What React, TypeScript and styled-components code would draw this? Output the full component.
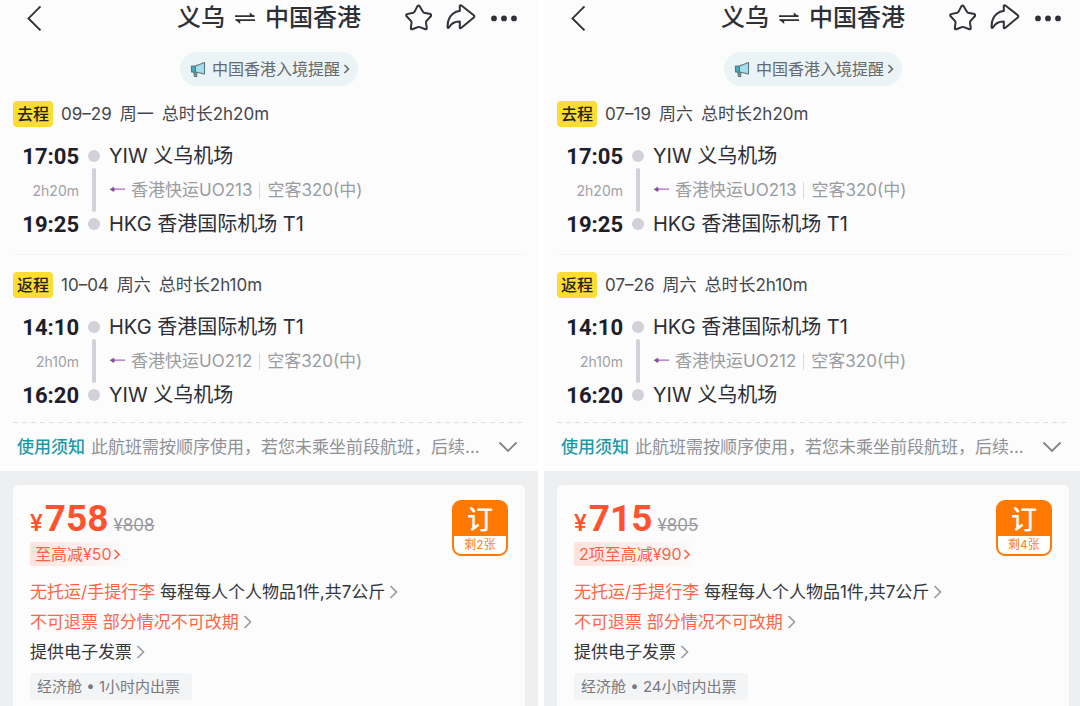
import React from "react";
import styled, { createGlobalStyle } from "styled-components";

const GlobalStyle = createGlobalStyle`
  *, *::before, *::after { box-sizing: border-box; }
  body {
    margin: 0;
    overflow-x: clip;
    background: #fff;
    font-family: Inter, "Noto Sans CJK SC", sans-serif;
    color: #2b2d33;
  }
  button { font-family: inherit; color: inherit; }
  h1, p { margin: 0; }
`;

const Compare = styled.main`
  display: grid;
  grid-template-columns: 1fr 1fr;
  gap: 6px;
  min-height: 100vh;
  margin-right: -2px;
`;

const Panel = styled.section`
  display: flex;
  flex-direction: column;
  min-width: 0;
  background: #fcfcfc;
`;

const Header = styled.header`
  display: grid;
  grid-template-columns: 1fr auto 1fr;
  align-items: center;
  height: 36px;
  padding: 0 20px 0 26px;
`;

const Title = styled.h1`
  display: flex;
  align-items: center;
  gap: 10px;
  margin-left: -6px;
  font-size: 24px;
  line-height: 36px;
  font-weight: 500;
  color: #2f3034;
  white-space: nowrap;
`;

const IconButton = styled.button`
  display: inline-flex;
  align-items: center;
  justify-self: start;
  padding: 0;
  border: 0;
  background: none;
  color: #2f3238;
  cursor: pointer;
  svg { display: block; }
`;

const Actions = styled.div`
  display: flex;
  justify-content: flex-end;
  align-items: center;
  gap: 14px;
`;

const Reminder = styled.button`
  display: flex;
  align-items: center;
  align-self: center;
  height: 34px;
  margin-top: 16px;
  padding: 0 8px 0 10px;
  border: 0;
  border-radius: 17px;
  background: #eaf3f5;
  font-size: 16px;
  line-height: 24px;
  color: #66696d;
  cursor: pointer;
  span { margin: 0 3px 0 5px; }
`;

const Trip = styled.section<{ $first?: boolean }>`
  margin: 0 13px;
  padding: ${(p) => (p.$first ? "15px 0 13px" : "17px 0 10px")};
  border-bottom: ${(p) => (p.$first ? "1px solid #f4f5f6" : "0")};
`;

const TripHead = styled.div`
  display: flex;
  align-items: center;
  gap: 8px;
  font-size: 17px;
  line-height: 26px;
  color: #45474d;
  white-space: nowrap;
`;

const Tag = styled.span`
  width: 40px;
  border-radius: 4px;
  background: #fddc34;
  font-size: 16px;
  font-weight: 500;
  text-align: center;
  color: #23241f;
`;

const Leg = styled.div`
  display: grid;
  grid-template-columns: 66px 30px 1fr;
  grid-template-rows: repeat(3, 34px);
  align-items: center;
  margin-top: 12px;
`;

const Time = styled.time`
  grid-column: 1;
  font-family: Roboto, sans-serif;
  font-size: 22px;
  font-weight: 700;
  text-align: right;
  color: #1d2028;
`;

const Duration = styled.span`
  grid-column: 1;
  font-size: 14px;
  text-align: right;
  color: #9fa1a6;
`;

const Track = styled.div`
  grid-column: 2;
  grid-row: 1 / 4;
  align-self: stretch;
  display: flex;
  flex-direction: column;
  align-items: center;
  gap: 6px;
  padding: 11px 0;
`;

const Stop = styled.span`
  width: 12px;
  height: 12px;
  border-radius: 50%;
  background: #d0d1d9;
`;

const Rail = styled.span`
  flex: 1;
  width: 4px;
  border-radius: 2px;
  background: #d0d1d9;
`;

const Station = styled.span`
  grid-column: 3;
  font-size: 20px;
  line-height: 34px;
  color: #2b2e36;
  white-space: nowrap;
`;

const Carrier = styled.span`
  grid-column: 3;
  display: flex;
  align-items: center;
  font-size: 17px;
  line-height: 34px;
  color: #9a9ca1;
  white-space: nowrap;
  svg { margin-right: 5px; }
`;

const Bar = styled.i`
  width: 1px;
  height: 17px;
  margin: 0 7px;
  background: #d9dadd;
`;

const Dashes = styled.div`
  height: 1px;
  margin: 0 12px 0 13px;
  background: repeating-linear-gradient(90deg, #dfe0e2 0 5px, transparent 5px 9px);
`;

const Notice = styled.button`
  display: flex;
  align-items: center;
  justify-content: space-between;
  height: 48px;
  padding: 0 20px 0 17px;
  border: 0;
  background: none;
  text-align: left;
  font-size: 17px;
  line-height: 26px;
  color: #8f9196;
  white-space: nowrap;
  cursor: pointer;
  strong { font-weight: 500; color: #1c9aa6; margin-right: 6px; }
  svg { flex: none; }
`;

const FareArea = styled.div`
  flex: 1;
  display: flex;
  padding: 14px 13px 0;
  background: #edeff1;
`;

const FareCard = styled.article`
  flex: 1;
  display: flex;
  justify-content: space-between;
  align-items: flex-start;
  padding: 15px 17px 6px;
  border-radius: 6px 6px 0 0;
  background: #fcfcfc;
`;

const FareInfo = styled.div`
  display: flex;
  flex-direction: column;
  align-items: flex-start;
`;

const PriceRow = styled.div`
  display: flex;
  align-items: baseline;
  height: 40px;
  line-height: 38px;
  color: #ff5330;
`;

const Price = styled.strong`
  font-family: Roboto, sans-serif;
  font-size: 37px;
  font-weight: 700;
  small { margin-right: 2px; font-size: 24px; font-weight: 500; }
`;

const OldPrice = styled.del`
  margin-left: 5px;
  font-size: 17px;
  color: #96989c;
`;

const Discount = styled.button`
  display: flex;
  align-items: center;
  gap: 1px;
  height: 24px;
  margin: 2px 0 11px;
  padding: 0 2px 0 5px;
  border: 0;
  border-radius: 3px;
  background: linear-gradient(90deg, #fde2de, #fcfafa);
  font-size: 16px;
  line-height: 24px;
  color: #fb6349;
  cursor: pointer;
`;

const Rule = styled.button`
  display: flex;
  align-items: center;
  gap: 4px;
  height: 30px;
  padding: 0;
  border: 0;
  background: none;
  font-size: 17px;
  line-height: 30px;
  color: #34363c;
  white-space: nowrap;
  cursor: pointer;
  em { font-style: normal; color: #ff6549; }
`;

const Cabin = styled.p`
  margin-top: 6px;
  padding: 0 12px 0 7px;
  border-radius: 4px;
  background: #f3f4f6;
  font-size: 15px;
  line-height: 27px;
  color: #77797f;
`;

const Book = styled.button`
  display: flex;
  flex-direction: column;
  width: 56px;
  height: 56px;
  padding: 0;
  border: 2px solid #ff7800;
  border-radius: 9px;
  overflow: hidden;
  background: #ff7800;
  color: #fff;
  text-align: center;
  cursor: pointer;
`;

const BookLabel = styled.span`
  width: 100%;
  height: 34px;
  font-size: 26px;
  font-weight: 500;
  line-height: 36px;
`;

const Left = styled.span`
  flex: 1;
  width: 100%;
  background: #fff;
  color: #ff7f1a;
  font-size: 12px;
  line-height: 18px;
`;

function Chevron({ size, color, weight = 2 }: { size: number; color: string; weight?: number }) {
  return (
    <svg width={size / 2 + 2} height={size} viewBox={`0 0 ${size / 2 + 2} ${size}`} fill="none" stroke={color} strokeWidth={weight}>
      <path d={`M1.5 1L${size / 2 + 0.5} ${size / 2}L1.5 ${size - 1}`} />
    </svg>
  );
}

function Swap() {
  return (
    <svg width="20" height="12" viewBox="0 0 20 12" fill="none" stroke="#2f3034" strokeWidth="1.7">
      <path d="M0 4.2H19.5M20 8.2H0.5" />
      <path d="M14.8 0.4L19.6 4.6H14.8ZM5.2 12L0.4 7.8H5.2Z" fill="#2f3034" stroke="none" />
    </svg>
  );
}

function Megaphone() {
  return (
    <svg width="17" height="17" viewBox="0 0 17 17" fill="none">
      <path d="M5 5L14.5 1.5V13L5 11Z" fill="#a5dfeb" />
      <path d="M1.5 5H5.5V11H1.5ZM3.5 11H6.5V15.5H4.5Z" fill="#46a9bd" />
      <path d="M1.5 5H5.5L14.5 1.5V13L5.5 11H1.5ZM3.7 11L4.6 15.5H6.7V11.3M5.5 5V11" stroke="#5f777e" strokeWidth="1.1" strokeLinejoin="round" />
    </svg>
  );
}

function AirlineMark() {
  return (
    <svg width="17" height="8" viewBox="0 0 17 8" fill="none">
      <path d="M0.5 3.2L4.5 0.8L6 2.4H16V3.8H6.5L4.5 6Z" fill="#a56cb5" />
      <path d="M1.8 3.2L4.5 1.8V5Z" fill="#7b3a93" />
    </svg>
  );
}

interface Flight {
  tag: string;
  date: string;
  day: string;
  total: string;
  depart: string;
  arrive: string;
  from: string;
  to: string;
  flightNo: string;
}

interface Offer {
  trips: Flight[];
  price: string;
  oldPrice: string;
  discount: string;
  left: string;
  cabin: string;
}

const YIW = "YIW 义乌机场";
const HKG = "HKG 香港国际机场 T1";

const makeTrips = (out: string, outDay: string, back: string): Flight[] => [
  { tag: "去程", date: out, day: outDay, total: "2h20m", depart: "17:05", arrive: "19:25", from: YIW, to: HKG, flightNo: "UO213" },
  { tag: "返程", date: back, day: "周六", total: "2h10m", depart: "14:10", arrive: "16:20", from: HKG, to: YIW, flightNo: "UO212" },
];

const offers: Offer[] = [
  { trips: makeTrips("09–29", "周一", "10–04"), price: "758", oldPrice: "808", discount: "至高减¥50", left: "剩2张", cabin: "经济舱 • 1小时内出票" },
  { trips: makeTrips("07–19", "周六", "07–26"), price: "715", oldPrice: "805", discount: "2项至高减¥90", left: "剩4张", cabin: "经济舱 • 24小时内出票" },
];

function OfferPanel({ offer }: { offer: Offer }) {
  return (
    <Panel>
      <Header>
        <IconButton aria-label="返回">
          <svg width="16" height="26" viewBox="0 0 16 26" fill="none" stroke="currentColor" strokeWidth="1.9">
            <path d="M14.5 1.4L2.5 13.4L14.5 25.4" />
          </svg>
        </IconButton>
        <Title>
          <span>义乌</span>
          <Swap />
          <span>中国香港</span>
        </Title>
        <Actions>
          <IconButton aria-label="收藏">
            <svg width="28" height="28" viewBox="0 0 28 28" fill="none" stroke="currentColor" strokeWidth="2" strokeLinejoin="round">
              <path d="M13.6 1.9Q14.8 1.2 15.8 2.4L18.8 7.6Q19.2 8.4 20.2 8.7L26.4 10.1Q27.8 10.8 27 12L22.4 17.2Q21.9 17.8 22 18.7L22.8 24.4Q22.6 25.6 21.3 25.3L15.8 23.1Q14.8 22.8 13.8 23.1L8.3 25.3Q7 25.6 6.8 24.4L7.5 18.7Q7.6 17.8 7.1 17.2L2.4 12Q1.7 10.8 3.1 10.1L9.2 8.7Q10.2 8.4 10.6 7.6Z" />
            </svg>
          </IconButton>
          <IconButton aria-label="分享">
            <svg width="30" height="28" viewBox="0 0 30 28" fill="none" stroke="currentColor" strokeWidth="2" strokeLinejoin="round">
              <path d="M13.8 1.6Q14.4 0.9 15.4 1.5L27.8 11.2Q29 12.3 27.8 13.4L15.4 23.8Q14.4 24.5 13.8 23.8V17.6C8.5 17.4 5.4 19.4 2.8 23.6Q1.9 24.6 1.6 23.3C1.2 15 5.6 7.6 13.8 6.9Z" />
            </svg>
          </IconButton>
          <IconButton aria-label="更多">
            <svg width="28" height="8" viewBox="0 0 28 8" fill="currentColor">
              <circle cx="4" cy="4.4" r="2.9" />
              <circle cx="14" cy="4.4" r="2.9" />
              <circle cx="24" cy="4.4" r="2.9" />
            </svg>
          </IconButton>
        </Actions>
      </Header>

      <Reminder>
        <Megaphone />
        <span>中国香港入境提醒</span>
        <Chevron size={10} color="#66696d" weight={1.6} />
      </Reminder>

      {offer.trips.map((t, i) => (
        <Trip key={t.tag} $first={i === 0}>
          <TripHead>
            <Tag>{t.tag}</Tag>
            <span>{t.date}</span>
            <span>{t.day}</span>
            <span>总时长{t.total}</span>
          </TripHead>
          <Leg>
            <Time>{t.depart}</Time>
            <Track>
              <Stop />
              <Rail />
              <Stop />
            </Track>
            <Station>{t.from}</Station>
            <Duration>{t.total}</Duration>
            <Carrier>
              <AirlineMark />
              香港快运{t.flightNo}
              <Bar />
              空客320(中)
            </Carrier>
            <Time>{t.arrive}</Time>
            <Station>{t.to}</Station>
          </Leg>
        </Trip>
      ))}

      <Dashes />
      <Notice>
        <span>
          <strong>使用须知</strong>
          此航班需按顺序使用，若您未乘坐前段航班，后续...
        </span>
        <svg width="20" height="12" viewBox="0 0 20 12" fill="none" stroke="#85878c" strokeWidth="1.9">
          <path d="M1.5 1.5L10 10L18.5 1.5" />
        </svg>
      </Notice>

      <FareArea>
        <FareCard>
          <FareInfo>
            <PriceRow>
              <Price>
                <small>¥</small>
                {offer.price}
              </Price>
              <OldPrice>¥{offer.oldPrice}</OldPrice>
            </PriceRow>
            <Discount>
              {offer.discount}
              <Chevron size={11} color="#fb6349" weight={1.6} />
            </Discount>
            <Rule>
              <span>
                <em>无托运/手提行李</em> 每程每人个人物品1件,共7公斤
              </span>
              <Chevron size={14} color="#97999e" weight={1.6} />
            </Rule>
            <Rule>
              <em>不可退票 部分情况不可改期</em>
              <Chevron size={14} color="#97999e" weight={1.6} />
            </Rule>
            <Rule>
              提供电子发票
              <Chevron size={14} color="#97999e" weight={1.6} />
            </Rule>
            <Cabin>{offer.cabin}</Cabin>
          </FareInfo>
          <Book>
            <BookLabel>订</BookLabel>
            <Left>{offer.left}</Left>
          </Book>
        </FareCard>
      </FareArea>
    </Panel>
  );
}

export default function App() {
  return (
    <>
      <GlobalStyle />
      <Compare>
        {offers.map((o) => (
          <OfferPanel key={o.price} offer={o} />
        ))}
      </Compare>
    </>
  );
}
